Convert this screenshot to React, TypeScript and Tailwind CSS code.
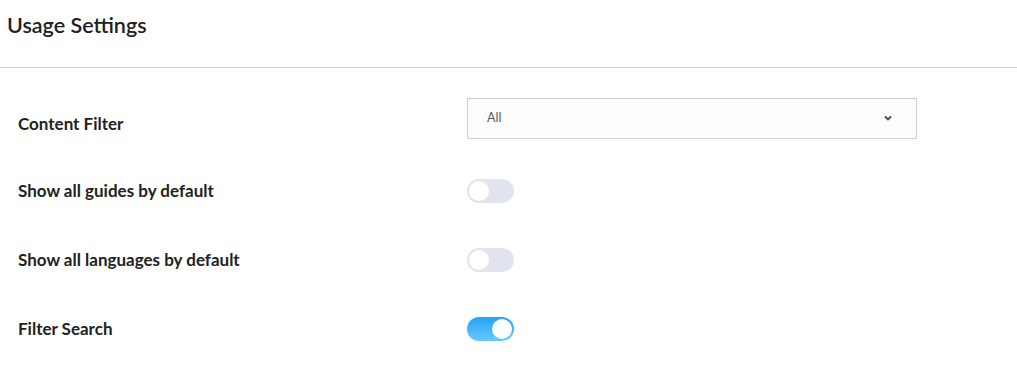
import React from "react";

function Toggle({ on }: { on: boolean }) {
  return (
    <div
      className={
        "relative w-[47px] h-[24px] rounded-full " +
        (on ? "bg-gradient-to-b from-[#1ea3f7] to-[#66c9ff]" : "bg-[#e1e3ee]")
      }
    >
      <div
        className={
          "absolute top-[2px] w-[20px] h-[20px] rounded-full bg-white " +
          (on ? "left-[25px]" : "left-[2px]")
        }
      />
    </div>
  );
}

function Row({ label, children }: { label: string; children: React.ReactNode }) {
  return (
    <div className="flex items-center h-[69px]">
      <div className="w-[467px] pl-[18px] text-[17px] font-bold text-[#222]">{label}</div>
      <div className="flex items-center">{children}</div>
    </div>
  );
}

export default function App() {
  return (
    <div className="w-[1017px] h-[385px] bg-white" style={{ fontFamily: "Lato, 'Noto Sans', sans-serif" }}>
      <div className="h-[68px] border-b border-[#cfcfcf] flex items-start">
        <h1 className="pl-[7px] pt-[9px] text-[21.5px] font-semibold text-[#222]">Usage Settings</h1>
      </div>
      <div className="pt-[15px]">
        <div className="flex items-center h-[73px]">
          <div className="w-[467px] pl-[18px] pt-[8px] text-[17px] font-bold text-[#222]">Content Filter</div>
          <div className="w-[450px] h-[41px] border border-[#c9ceda] bg-[#fffcfd] flex items-center justify-between pl-[19px] pr-[24px] -mt-[3px]">
            <span className="text-[12.5px] text-[#555a60]">All</span>
            <svg width="8" height="6" viewBox="0 0 8 6">
              <path d="M1 1.5 L4 4.5 L7 1.5" stroke="#444a55" strokeWidth="1.8" fill="none" />
            </svg>
          </div>
        </div>
        <Row label="Show all guides by default">
          <Toggle on={false} />
        </Row>
        <Row label="Show all languages by default">
          <Toggle on={false} />
        </Row>
        <Row label="Filter Search">
          <Toggle on={true} />
        </Row>
      </div>
    </div>
  );
}
